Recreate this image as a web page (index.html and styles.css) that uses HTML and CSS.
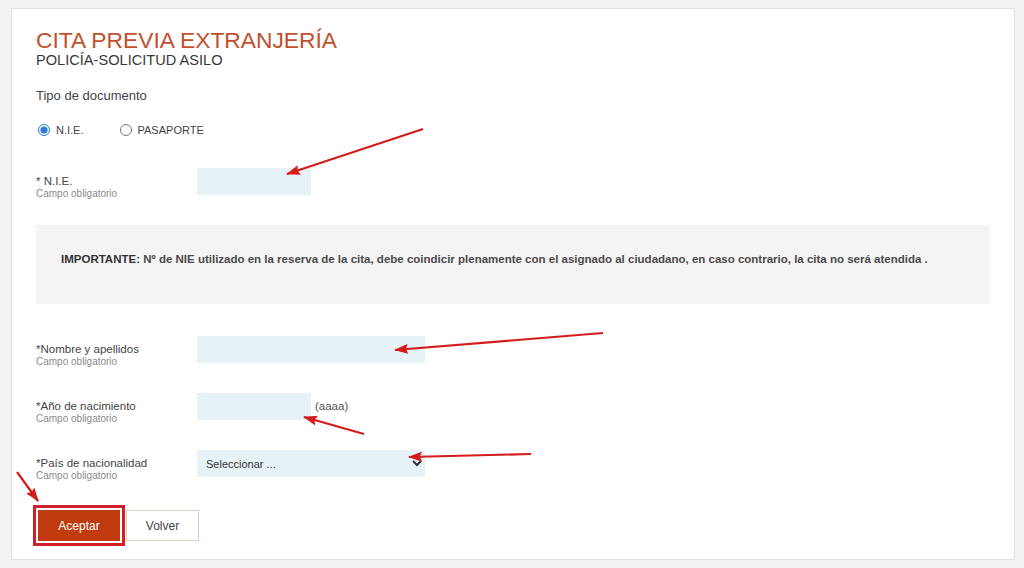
FILE: index.html
```html
<!DOCTYPE html>
<html lang="es">
<head>
  <meta charset="UTF-8">
  <meta name="viewport" content="width=device-width, initial-scale=1">
  <title>Cita previa extranjería</title>
  <link rel="stylesheet" href="styles.css">
</head>
<body>
  <div class="tarjeta">
    <h1 class="titulo">CITA PREVIA EXTRANJERÍA</h1>
    <h2 class="subtitulo">POLICÍA-SOLICITUD ASILO</h2>

    <p class="tipo">Tipo de documento</p>
    <div class="radios">
      <label class="opcion"><input type="radio" name="tipo" checked> N.I.E.</label>
      <label class="opcion"><input type="radio" name="tipo"> PASAPORTE</label>
    </div>

    <div class="fila fila-nie">
      <div class="etiqueta">
        <span class="nombre-campo">* N.I.E.</span>
        <span class="obligatorio">Campo obligatorio</span>
      </div>
      <input class="campo corto" type="text">
    </div>

    <div class="aviso">
      <strong>IMPORTANTE:</strong> Nº de NIE utilizado en la reserva de la cita, debe coindicir plenamente con el asignado al ciudadano, en caso contrario, la cita no será atendida .
    </div>

    <div class="fila fila-nombre">
      <div class="etiqueta">
        <span class="nombre-campo">*Nombre y apellidos</span>
        <span class="obligatorio">Campo obligatorio</span>
      </div>
      <input class="campo largo" type="text">
    </div>

    <div class="fila">
      <div class="etiqueta">
        <span class="nombre-campo">*Año de nacimiento</span>
        <span class="obligatorio">Campo obligatorio</span>
      </div>
      <input class="campo corto" type="text">
      <span class="formato">(aaaa)</span>
    </div>

    <div class="fila">
      <div class="etiqueta">
        <span class="nombre-campo">*País de nacionalidad</span>
        <span class="obligatorio">Campo obligatorio</span>
      </div>
      <select class="campo largo selector">
        <option>Seleccionar ...</option>
      </select>
    </div>

    <div class="botones">
      <button class="btn aceptar">Aceptar</button>
      <button class="btn volver">Volver</button>
    </div>
  </div>

  <!-- flechas rojas de la captura -->
  <svg class="flechas" width="1024" height="568" viewBox="0 0 1024 568">
    <defs>
      <marker id="punta" markerUnits="userSpaceOnUse" markerWidth="14" markerHeight="10" refX="13" refY="5" orient="auto">
        <path d="M0,0 L14,5 L0,10 L2,5 z" fill="#d41c1c"/>
      </marker>
    </defs>
    <g stroke="#d41c1c" stroke-width="2.2" fill="none" marker-end="url(#punta)">
      <line x1="423" y1="129" x2="287" y2="174"/>
      <line x1="603" y1="333" x2="395" y2="350"/>
      <line x1="364" y1="434" x2="304" y2="417"/>
      <line x1="531" y1="454" x2="409" y2="457"/>
      <line x1="17" y1="472" x2="38" y2="501"/>
    </g>
  </svg>
</body>
</html>
```

FILE: styles.css
```css
/* Reset y estilos globales */
* {
  box-sizing: border-box;
}
body {
  margin: 0;
  height: 568px;
  overflow: hidden;
  position: relative;
  background: #f2f2f2;
  font-family: "Liberation Sans", Arial, sans-serif;
  color: #444;
}
.tarjeta {
  width: 1004px;
  margin: 8px 0 0 11px;
  padding: 19px 24px 18px;
  background: #fff;
  border: 1px solid #e2e2e2;
}
.titulo {
  margin: 0;
  font-size: 22.8px;
  line-height: 24px;
  font-weight: normal;
  color: #c1502e;
}
.subtitulo {
  margin: 0;
  font-size: 14.6px;
  line-height: 16px;
  font-weight: normal;
  color: #383838;
}
.tipo {
  margin: 20px 0 0;
  font-size: 13px;
  line-height: 16px;
}
.radios {
  margin-top: 18px;
  height: 16px;
  display: flex;
  align-items: center;
  font-size: 11px;
}
.opcion {
  display: flex;
  align-items: center;
  margin-left: 2px;
  margin-right: 34px;
}
.opcion input {
  width: 12px;
  height: 12px;
  margin: 0 6px 0 0;
  accent-color: #2a78d8;
}
/* Filas del formulario */
.fila {
  display: flex;
  align-items: flex-start;
  margin-top: 25px;
}
.fila-nie {
  margin-top: 30px;
}
.fila-nombre {
  margin-top: 32px;
}
.etiqueta {
  width: 161px;
  padding-top: 6px;
  display: flex;
  flex-direction: column;
}
.nombre-campo {
  font-size: 11.5px;
  line-height: 14px;
  color: #444;
}
.obligatorio {
  font-size: 10px;
  line-height: 12px;
  color: #8a8a8a;
}
.campo {
  height: 27px;
  border: none;
  background: #e7f2f7;
  font-family: inherit;
}
.corto {
  width: 114px;
}
.largo {
  width: 228px;
}
.formato {
  margin-left: 4px;
  font-size: 11.5px;
  line-height: 27px;
  color: #555;
}
.selector {
  padding: 0 0 0 5px;
  font-size: 11px;
  color: #333;
}
.aviso {
  margin-top: 25px;
  padding: 27px 25px 38px;
  background: #f5f3f3;
  font-size: 11.5px;
  line-height: 14px;
  font-weight: bold;
  color: #4a4a4a;
}
.aviso strong {
  color: #333;
}
/* Botones */
.botones {
  display: flex;
  gap: 6px;
  margin: 28px 0 0 2px;
}
.btn {
  height: 31px;
  font-family: inherit;
  font-size: 12px;
  cursor: pointer;
}
.aceptar {
  width: 82px;
  border: none;
  background: #c03b10;
  color: #fff;
  outline: 3px solid #d2202a;
  outline-offset: 2px;
}
.volver {
  width: 73px;
  border: 1px solid #dccfc7;
  background: #fff;
  color: #444;
}
.flechas {
  position: absolute;
  top: 0;
  left: 0;
  pointer-events: none;
}
```
